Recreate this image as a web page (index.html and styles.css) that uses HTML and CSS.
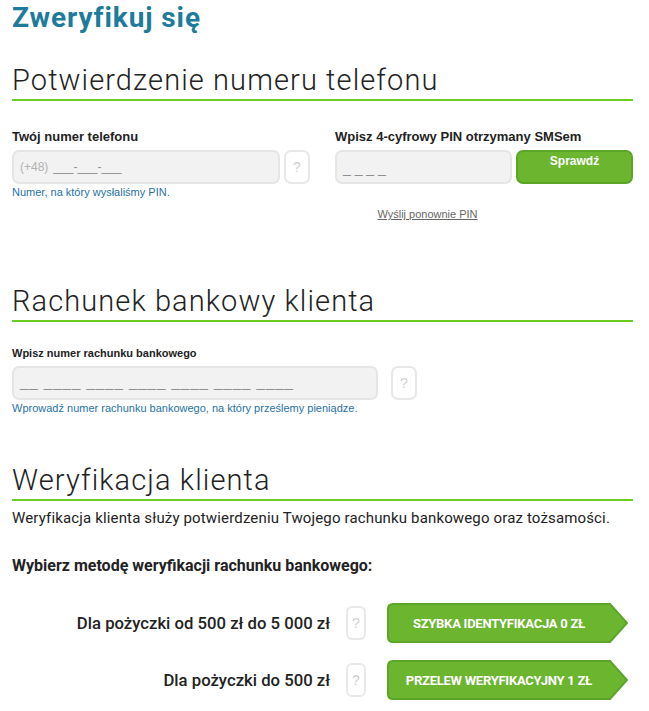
FILE: index.html
```html
<!DOCTYPE html>
<html lang="pl">
<head>
<meta charset="utf-8">
<title>Zweryfikuj się</title>
<link rel="stylesheet" href="styles.css">
</head>
<body>
<div class="page">
  <h1 class="title">Zweryfikuj się</h1>

  <section class="sec sec-phone">
    <h2 class="sec-head">Potwierdzenie numeru telefonu</h2>
    <div class="two-col">
      <div class="col">
        <div class="lbl">Twój numer telefonu</div>
        <div class="field-row">
          <div class="input input-phone"><span class="prefix">(+48)</span><span class="mask">___-___-___</span></div>
          <span class="help-box">?</span>
        </div>
        <p class="hint">Numer, na który wysłaliśmy PIN.</p>
      </div>
      <div class="col">
        <div class="lbl">Wpisz 4-cyfrowy PIN otrzymany SMSem</div>
        <div class="field-row">
          <div class="pin-col">
            <div class="input input-pin"><span class="mask mask-pin">_ _ _ _</span></div>
            <a class="resend" href="#">Wyślij ponownie PIN</a>
          </div>
          <button class="btn-check" type="button">Sprawdź</button>
        </div>
      </div>
    </div>
  </section>

  <section class="sec sec-bank">
    <h2 class="sec-head">Rachunek bankowy klienta</h2>
    <div class="lbl lbl-small">Wpisz numer rachunku bankowego</div>
    <div class="field-row bank-row">
      <div class="input input-bank"><span class="mask mask-bank">__ ____ ____ ____ ____ ____ ____</span></div>
      <span class="help-box">?</span>
    </div>
    <p class="hint">Wprowadź numer rachunku bankowego, na który prześlemy pieniądze.</p>
  </section>

  <section class="sec sec-verify">
    <h2 class="sec-head">Weryfikacja klienta</h2>
    <p class="lead">Weryfikacja klienta służy potwierdzeniu Twojego rachunku bankowego oraz tożsamości.</p>
    <p class="choose">Wybierz metodę weryfikacji rachunku bankowego:</p>

    <div class="method">
      <span class="method-label">Dla pożyczki od 500 zł do 5 000 zł</span>
      <span class="help-box help-narrow">?</span>
      <button class="arrow-btn" type="button">
        <svg class="arrow-bg" viewBox="0 0 242 40" width="242" height="40" aria-hidden="true">
          <path d="M6 1 H223 L240 20 L223 39 H6 Q1 39 1 34 V6 Q1 1 6 1 Z" fill="#6bb52f" stroke="#5ca526" stroke-width="2"/>
        </svg>
        <span class="arrow-text">SZYBKA IDENTYFIKACJA 0 ZŁ</span>
      </button>
    </div>

    <div class="method">
      <span class="method-label">Dla pożyczki do 500 zł</span>
      <span class="help-box help-narrow">?</span>
      <button class="arrow-btn" type="button">
        <svg class="arrow-bg" viewBox="0 0 242 40" width="242" height="40" aria-hidden="true">
          <path d="M6 1 H223 L240 20 L223 39 H6 Q1 39 1 34 V6 Q1 1 6 1 Z" fill="#6bb52f" stroke="#5ca526" stroke-width="2"/>
        </svg>
        <span class="arrow-text">PRZELEW WERYFIKACYJNY 1 ZŁ</span>
      </button>
    </div>
  </section>
</div>
</body>
</html>
```

FILE: styles.css
```css
* { box-sizing: border-box; }

html, body {
  margin: 0;
  padding: 0;
  background: #ffffff;
}

body {
  font-family: "Liberation Sans", Arial, sans-serif;
  color: #222;
}

.page {
  width: 649px;
  padding: 1px 16px 0 12px;
}

.title {
  margin: 0;
  font-family: Roboto, sans-serif;
  font-weight: 700;
  font-size: 28px;
  line-height: 33px;
  letter-spacing: 0.9px;
  color: #1d7c9b;
}

.sec-head {
  margin: 0;
  font-family: Roboto, sans-serif;
  font-weight: 300;
  font-size: 29px;
  line-height: 34px;
  letter-spacing: 1.1px;
  color: #222;
  padding-bottom: 2px;
  border-bottom: 2px solid #6acd20;
}

.sec-phone { margin-top: 29px; }
.sec-bank { margin-top: 63px; }
.sec-verify { margin-top: 48px; }

.two-col {
  display: grid;
  grid-template-columns: 1fr 1fr;
  column-gap: 25px;
  margin-top: 28px;
}

.lbl {
  font-weight: 700;
  font-size: 13px;
  line-height: 15px;
  color: #222;
}

.lbl-small {
  font-size: 11px;
  line-height: 13px;
  margin-top: 25px;
}

.field-row {
  display: flex;
  align-items: flex-start;
  gap: 4px;
  margin-top: 6px;
}

.input {
  flex: 1;
  height: 34px;
  display: flex;
  align-items: center;
  padding: 0 6px;
  background: #f1f2f1;
  border: 2px solid #e4e6e4;
  border-radius: 7px;
  font-size: 12px;
  color: #999;
  white-space: pre;
}

.prefix {
  color: #b3b3b3;
  margin-right: 5px;
}

.mask { color: #8f8f8f; }

.input-pin {
  flex: none;
  align-items: flex-end;
  padding-bottom: 6px;
}

.mask-pin { font-size: 14px; }

.pin-col {
  flex: 1;
  display: flex;
  flex-direction: column;
  align-items: stretch;
}

.resend {
  display: block;
  margin-top: 24px;
  padding-left: 8px;
  text-align: center;
  font-size: 11px;
  line-height: 13px;
  color: #666;
  text-decoration: underline;
}

.btn-check {
  width: 117px;
  height: 34px;
  padding: 2px 0 0;
  margin: 0;
  background: #6bb62e;
  border: 2px solid #5ba527;
  border-radius: 7px;
  color: #fff;
  font-family: "Liberation Sans", Arial, sans-serif;
  font-weight: 700;
  font-size: 12px;
  line-height: 15px;
  display: flex;
  justify-content: center;
  align-items: flex-start;
}

.help-box {
  width: 26px;
  height: 34px;
  flex: none;
  display: flex;
  align-items: center;
  justify-content: center;
  background: #fff;
  border: 2px solid #e8e8e8;
  border-radius: 7px;
  font-size: 14px;
  color: #d0d0d0;
}

.hint {
  margin: 2px 0 0;
  font-size: 11px;
  line-height: 13px;
  color: #1f72a6;
}

.bank-row {
  width: 405px;
  gap: 13px;
}

.mask-bank {
  font-size: 15px;
  letter-spacing: 1px;
  padding-bottom: 4px;
}

.input-bank { padding-left: 6px; }

.lead {
  margin: 8px 0 0;
  font-family: Roboto, sans-serif;
  font-size: 15px;
  line-height: 18px;
  letter-spacing: 0.15px;
  color: #222;
}

.choose {
  margin: 29px 0 0;
  font-family: Roboto, sans-serif;
  font-weight: 700;
  font-size: 16px;
  line-height: 19px;
  color: #222;
}

.method {
  display: flex;
  align-items: center;
  margin-top: 28px;
}

.method + .method { margin-top: 17px; }

.method-label {
  width: 318px;
  text-align: right;
  font-family: Roboto, sans-serif;
  font-weight: 500;
  font-size: 16.7px;
  color: #222;
}

.help-narrow {
  width: 20px;
  margin-left: 16px;
  border-radius: 6px;
}

.arrow-btn {
  position: relative;
  width: 242px;
  height: 40px;
  margin: 0 0 0 21px;
  padding: 0 18px 0 0;
  border: 0;
  background: transparent;
  display: flex;
  align-items: center;
  justify-content: center;
}

.arrow-bg {
  position: absolute;
  left: 0;
  top: 0;
}

.arrow-text {
  position: relative;
  font-family: Roboto, sans-serif;
  font-weight: 700;
  font-size: 13px;
  letter-spacing: -0.25px;
  color: #fff;
}
```
